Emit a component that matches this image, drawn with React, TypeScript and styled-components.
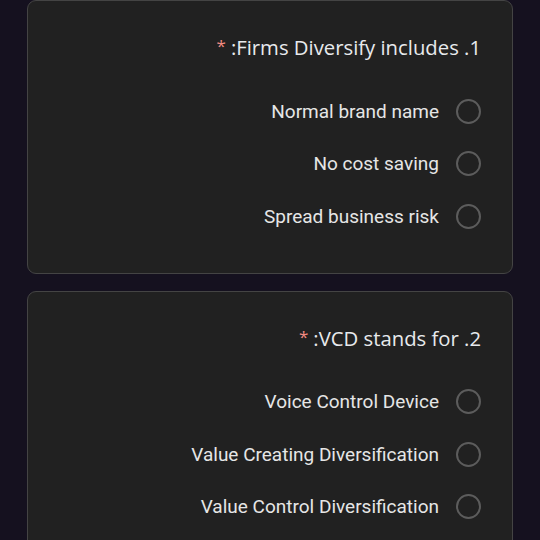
import * as React from "react";
import styled, { createGlobalStyle } from "styled-components";

const GlobalStyle = createGlobalStyle`
  html, body {
    margin: 0;
    padding: 0;
    background: #15111f;
  }
  body {
    font-family: Roboto, "Noto Sans", sans-serif;
  }
`;

const PageStyled = styled.div`
  width: 540px;
  height: 540px;
  overflow: hidden;
  padding: 0 27px;
  box-sizing: border-box;
  display: flex;
  flex-direction: column;
  gap: 17px;
`;

const CardStyled = styled.div`
  background: #212121;
  border: 1px solid #444444;
  border-radius: 9px;
  padding: 32px 31px 30px 31px;
  display: flex;
  flex-direction: column;
  flex-shrink: 0;
`;

const TitleStyled = styled.div`
  display: flex;
  justify-content: flex-end;
  align-items: baseline;
  gap: 5px;
  font-family: "Open Sans", Roboto, sans-serif;
  font-size: 20.3px;
  line-height: 28px;
  color: #e8eaed;
  margin-bottom: 22px;
  .required {
    color: #f28b82;
    font-size: 17px;
    position: relative;
    top: -3px;
  }
`;

const OptionRow = styled.label`
  display: flex;
  justify-content: flex-end;
  align-items: center;
  gap: 17px;
  height: 52.5px;
  font-size: 19px;
  color: #e6e6e6;
`;

const RadioCircle = styled.span`
  width: 25px;
  height: 25px;
  border-radius: 50%;
  border: 2px solid #5c5c5c;
  box-sizing: border-box;
  flex-shrink: 0;
`;

interface IQuestion {
  title: string;
  options: string[];
}

const Question: React.FC<IQuestion> = ({ title, options }) => (
  <CardStyled>
    <TitleStyled>
      <span className="required">*</span>
      <span>{title}</span>
    </TitleStyled>
    {options.map((option) => (
      <OptionRow key={option}>
        <span>{option}</span>
        <RadioCircle />
      </OptionRow>
    ))}
  </CardStyled>
);

const questions: IQuestion[] = [
  {
    title: ":Firms Diversify includes .1",
    options: ["Normal brand name", "No cost saving", "Spread business risk"],
  },
  {
    title: ":VCD stands for .2",
    options: [
      "Voice Control Device",
      "Value Creating Diversification",
      "Value Control Diversification",
    ],
  },
];

const App: React.FC = () => (
  <>
    <GlobalStyle />
    <PageStyled>
      {questions.map((q) => (
        <Question key={q.title} title={q.title} options={q.options} />
      ))}
    </PageStyled>
  </>
);

export default App;
